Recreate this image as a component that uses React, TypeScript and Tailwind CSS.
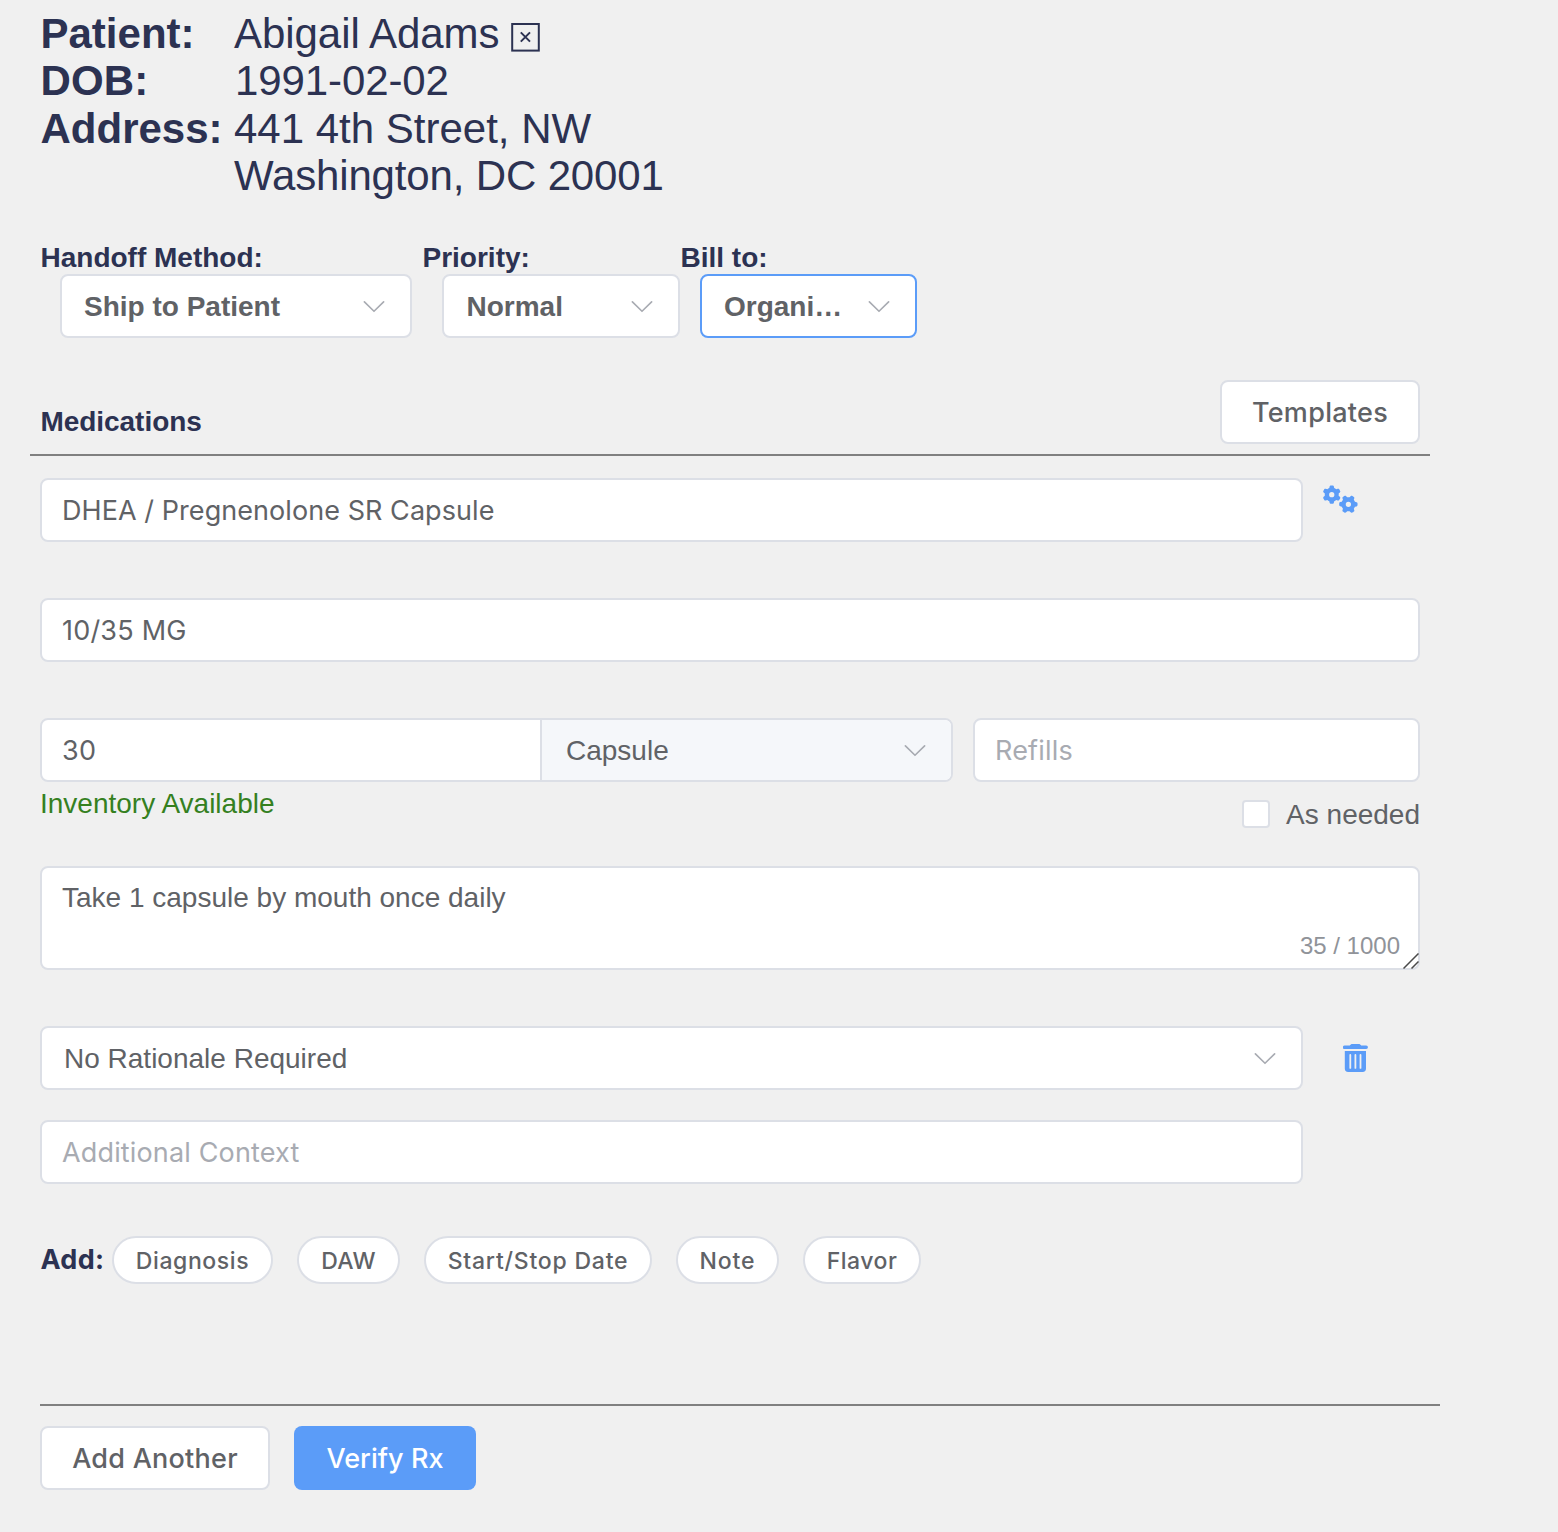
import type { ReactNode } from 'react'
import { FaGears } from 'react-icons/fa6'

const sans = "font-['Liberation_Sans',Arial,sans-serif]"
const ui = "font-['Inter',sans-serif]"
const frame = 'flex h-16 items-center rounded-lg border-2 border-[#dcdfe6] bg-white'
const selectBox = `${frame} pt-px`
const inputBox = `${ui} ${frame} pt-[3px] text-[27px]`

function Chevron() {
  return (
    <svg className="h-3 w-[22px] shrink-0" viewBox="0 0 22 12" fill="none" stroke="#a8abb2" strokeWidth="1.6" strokeLinecap="round" strokeLinejoin="round">
      <path d="M1.4 0.9L11 10.3L20.6 0.9" />
    </svg>
  )
}

function CloseBox() {
  return (
    <svg className="mt-[13px] ml-[11px] h-[29px] w-[29px]" viewBox="0 0 29 29" fill="none" stroke="#2c3252" strokeWidth="2">
      <rect x="1.2" y="1" width="26.6" height="26.6" />
      <path d="M9.8 9.4L19 18.6M19 9.4L9.8 18.6" />
    </svg>
  )
}

function TrashIcon() {
  return (
    <svg className="h-7 w-[25px]" viewBox="0 0 25 28">
      <path
        fill="#5b9cf8"
        fillRule="evenodd"
        d="M6.8 1.6C7.2.5 8.3 0 9.4 0h6.2c1.1 0 2.2.5 2.6 1.6h5a1.7 1.7 0 0 1 0 3.5H1.6a1.7 1.7 0 0 1 0-3.5zM1.8 7h21.2v17.6a3.4 3.4 0 0 1-3.4 3.4H5.2a3.4 3.4 0 0 1-3.4-3.4zM6.4 10.9v13a.9.9 0 0 0 1.8 0v-13a.9.9 0 0 0-1.8 0zM11.5 10.9v13a.9.9 0 0 0 1.8 0v-13a.9.9 0 0 0-1.8 0zM16.6 10.9v13a.9.9 0 0 0 1.8 0v-13a.9.9 0 0 0-1.8 0z"
      />
    </svg>
  )
}

function Labeled({ label, className, children }: { label: string; className: string; children: ReactNode }) {
  return (
    <div className={className}>
      <div className="h-[33px] pl-[0.5px] text-[28px] leading-[33px] font-bold whitespace-nowrap">{label}</div>
      <div className="pl-5">{children}</div>
    </div>
  )
}

function Select({ value, className }: { value: string; className: string }) {
  return (
    <div className={`${selectBox} justify-between pl-[22px] pr-[25px] text-[28px] font-bold text-[#606266] ${className}`}>
      <span>{value}</span>
      <Chevron />
    </div>
  )
}

function Chip({ label, className }: { label: string; className: string }) {
  return (
    <button className={`${ui} flex h-12 items-center justify-center rounded-full border-2 border-[#dcdfe6] bg-white pt-[3px] text-[23px] font-medium whitespace-nowrap text-[#606266] ${className}`}>
      {label}
    </button>
  )
}

export default function App() {
  return (
    <div className={`${sans} h-[1532px] w-full overflow-hidden bg-[#f0f0f0] pl-10 pt-2.5 text-[#2c3252]`}>
      <header className="grid h-[231px] grid-cols-[194px_1fr] content-start text-[42px] leading-[47.3px] whitespace-nowrap">
        <b className="pl-[0.5px]">Patient:</b>
        <div className="flex">
          <span className="tracking-[-0.05px]">Abigail Adams</span>
          <CloseBox />
        </div>
        <b className="pl-[0.5px] tracking-[0.1px]">DOB:</b>
        <span className="pl-px tracking-[-0.1px]">1991-02-02</span>
        <b className="pl-[0.5px]">Address:</b>
        <div>
          <div>441 4th Street, NW</div>
          <div className="tracking-[-0.15px]">Washington, DC 20001</div>
        </div>
      </header>

      <div className="flex">
        <Labeled label="Handoff Method:" className="w-[382px]">
          <Select value="Ship to Patient" className="w-[352px]" />
        </Labeled>
        <Labeled label="Priority:" className="w-[258px]">
          <Select value="Normal" className="w-[238px] pl-[22.5px]!" />
        </Labeled>
        <Labeled label="Bill to:" className="w-[240px]">
          <Select value="Organi…" className="w-[217px] border-[#5b9cf8]!" />
        </Labeled>
      </div>

      <div className="-ml-2.5 mt-[42px] flex h-[76px] w-[1400px] items-start justify-between border-b-2 border-[#808080] px-2.5">
        <h2 className="mt-[26px] pl-[0.5px] text-[28px] leading-8 font-bold tracking-[-0.05px]">Medications</h2>
        <button className={`${inputBox} w-[200px] justify-center font-medium tracking-[0.3px] text-[#606266]`}>Templates</button>
      </div>

      <main className="w-[1380px] text-[28px] text-[#606266]">
        <div className="mt-[22px] flex">
          <div className={`${inputBox} w-[1263px] pl-5 tracking-[0.06px]`}>DHEA / Pregnenolone SR Capsule</div>
          <FaGears className="ml-5 mt-[7px] h-7 w-[35px] text-[#5b9cf8]" />
        </div>

        <div className={`${inputBox} mt-14 pl-5 tracking-[0.2px]`}>10/35 MG</div>

        <div className="mt-14 flex gap-5">
          <div className="flex h-16 w-[913px] overflow-hidden rounded-lg border-2 border-[#dcdfe6] bg-white">
            <div className={`${ui} flex h-full w-[500px] items-center border-r-2 border-[#dcdfe6] pt-[3px] pl-5 text-[27px] tracking-[0.3px]`}>30</div>
            <div className="flex h-full flex-1 items-center justify-between bg-[#f5f7fa] pt-px pl-6 pr-[25px]">
              <span>Capsule</span>
              <Chevron />
            </div>
          </div>
          <div className={`${inputBox} w-[447px] pl-5 tracking-[0.2px] text-[#a8abb2]`}>Refills</div>
        </div>

        <div className="flex h-[84px] items-start justify-between">
          <span className="mt-1.5 leading-8 text-[#35801f]">Inventory Available</span>
          <label className="mt-4 flex items-center gap-4 leading-8">
            <span className="h-7 w-7 rounded border-2 border-[#dcdfe6] bg-white" />
            <span className="mt-px -mb-px">As needed</span>
          </label>
        </div>

        <div className="relative h-[104px] rounded-lg border-2 border-[#dcdfe6] bg-white pl-5 pt-3.5 leading-8">
          Take 1 capsule by mouth once daily
          <span className="absolute right-[18px] bottom-2 text-2xl leading-7 text-[#909399]">35 / 1000</span>
          <svg className="absolute -right-px -bottom-px h-4 w-4" viewBox="0 0 16 16" stroke="#4a4a4a" strokeWidth="1.5">
            <path d="M0.5 15.5L15.5 0.5M8.5 15.5L15.5 8.5" />
          </svg>
        </div>

        <div className="mt-14 flex items-center">
          <div className={`${selectBox} w-[1263px] justify-between pl-[22px] pr-[25px]`}>
            <span>No Rationale Required</span>
            <Chevron />
          </div>
          <div className="ml-10">
            <TrashIcon />
          </div>
        </div>

        <div className={`${inputBox} mt-[30px] w-[1263px] pl-5 tracking-[0.15px] text-[#a8abb2]`}>Additional Context</div>
      </main>

      <div className="mt-[52px] flex items-center gap-6">
        <div className="flex items-center">
          <b className={`${ui} w-[72px] pl-[0.5px] text-[27px] tracking-[0.3px]`}>Add:</b>
          <Chip label="Diagnosis" className="w-[161px] tracking-[0.6px]" />
        </div>
        <Chip label="DAW" className="w-[103px] tracking-[0.3px]" />
        <Chip label="Start/Stop Date" className="w-[228px] tracking-[0.78px]" />
        <Chip label="Note" className="w-[103px] tracking-[0.9px]" />
        <Chip label="Flavor" className="w-[118px] tracking-[0.5px]" />
      </div>

      <div className="mt-[120px] flex w-[1400px] gap-6 border-t-2 border-[#808080] pt-5">
        <button className={`${inputBox} w-[230px] justify-center font-medium tracking-[0.25px] text-[#606266]`}>Add Another</button>
        <button className={`${ui} flex h-16 w-[182px] items-center justify-center rounded-lg bg-[#5b9cf8] pt-[3px] text-[27px] font-medium tracking-[0.05px] text-white`}>Verify Rx</button>
      </div>
    </div>
  )
}
